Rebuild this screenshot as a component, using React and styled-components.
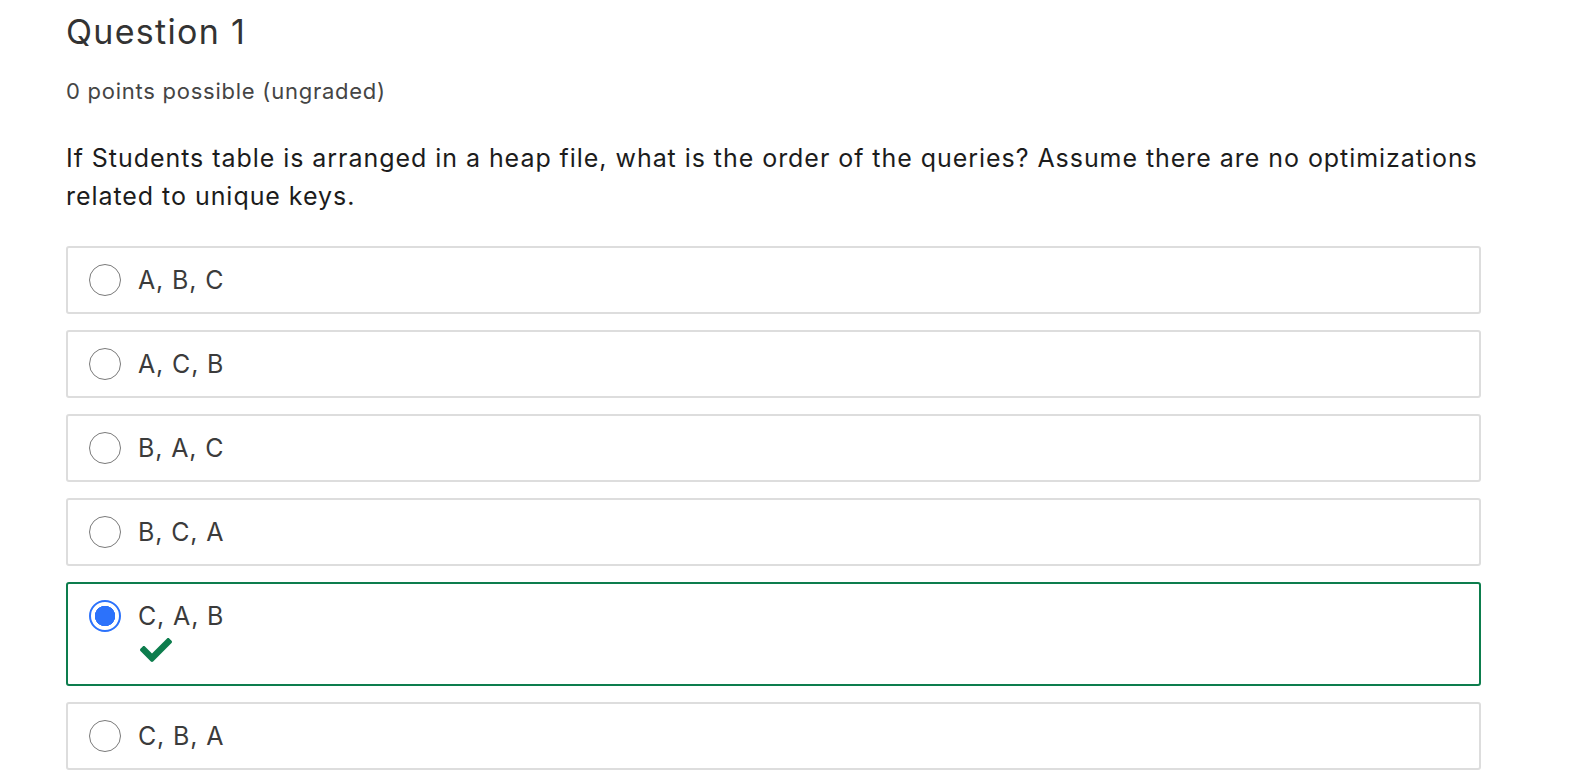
import React from "react";
import styled, { createGlobalStyle } from "styled-components";
import { FaCheck } from "react-icons/fa";

const options = [
    { label: "A, B, C" },
    { label: "A, C, B" },
    { label: "B, A, C" },
    { label: "B, C, A" },
    { label: "C, A, B", selected: true, correct: true },
    { label: "C, B, A" },
];

function App() {
    return (
        <>
            <GlobalStyle />
            <PageStyled>
                <TitleStyled>Question 1</TitleStyled>
                <PointsStyled>0 points possible (ungraded)</PointsStyled>
                <PromptStyled>
                    If Students table is arranged in a heap file, what is the order of the queries? Assume there are no optimizations
                    related to unique keys.
                </PromptStyled>

                <ListStyled>
                    {options.map((opt) => (
                        <OptionStyled key={opt.label} $correct={opt.correct}>
                            <RowStyled>
                                <RadioStyled $checked={opt.selected} />
                                <LabelStyled>{opt.label}</LabelStyled>
                            </RowStyled>
                            {opt.correct && (
                                <FeedbackStyled>
                                    <FaCheck size={32} />
                                </FeedbackStyled>
                            )}
                        </OptionStyled>
                    ))}
                </ListStyled>
            </PageStyled>
        </>
    );
}

const GlobalStyle = createGlobalStyle`
    body {
        margin: 0;
        background: #fff;
        font-family: Inter, "Noto Sans", sans-serif;
    }
`;

const PageStyled = styled.div`
    width: 1415px;
    padding: 8px 0 0 66px;
`;

const TitleStyled = styled.h2`
    margin: 0;
    font-size: 34px;
    font-weight: 400;
    line-height: 48px;
    letter-spacing: 1.3px;
    color: #333;
`;

const PointsStyled = styled.div`
    margin-top: 19px;
    font-size: 22px;
    line-height: 32px;
    letter-spacing: 0.75px;
    color: #454545;
`;

const PromptStyled = styled.p`
    margin: 32px 0 0;
    font-size: 25px;
    line-height: 38px;
    letter-spacing: 0.95px;
    color: #1c1c1c;
`;

const ListStyled = styled.div`
    display: flex;
    flex-direction: column;
    gap: 16px;
    margin-top: 31px;
`;

const OptionStyled = styled.div`
    border: 2px solid ${(p) => (p.$correct ? "#0d7d4d" : "#dddddd")};
    border-radius: 3px;
    padding: 16px 21px;
`;

const RowStyled = styled.div`
    display: flex;
    align-items: center;
    gap: 17px;
`;

const RadioStyled = styled.span`
    box-sizing: border-box;
    width: 32px;
    height: 32px;
    border-radius: 50%;
    border: ${(p) => (p.$checked ? "2px solid #2c72fb" : "1.5px solid #7a7a7a")};
    background: ${(p) => (p.$checked ? "radial-gradient(circle, #2c72fb 0 10px, #fff 10.5px)" : "#fff")};
    flex-shrink: 0;
`;

const LabelStyled = styled.span`
    font-size: 25px;
    line-height: 32px;
    letter-spacing: 0.85px;
    color: #3b3b3b;
`;

const FeedbackStyled = styled.div`
    height: 34px;
    padding-left: 51px;
    color: #0d7d4d;
    svg {
        display: block;
        margin-top: 2px;
    }
`;

export default App;
